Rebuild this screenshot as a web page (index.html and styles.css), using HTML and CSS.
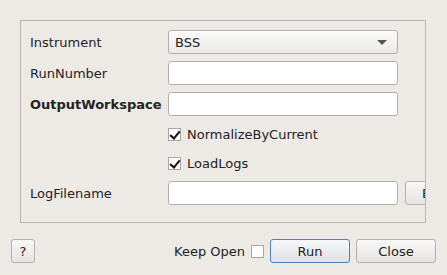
FILE: index.html
```html
<!DOCTYPE html>
<html lang="en">
<head>
    <meta charset="UTF-8">
    <title>LoadEventNexus</title>
    <link rel="stylesheet" href="styles.css">
</head>
<body>

<div class="dialog">
    <div class="frame">
        <div class="form">
            <label class="label">Instrument</label>
            <div class="field">
                <div class="combo">
                    <span>BSS</span>
                    <span class="arrow"></span>
                </div>
            </div>

            <label class="label">RunNumber</label>
            <div class="field"><input class="text" type="text"></div>

            <label class="label bold">OutputWorkspace</label>
            <div class="field"><input class="text" type="text"></div>

            <div class="label"></div>
            <div class="field check-row">
                <span class="check on"></span>NormalizeByCurrent
            </div>

            <div class="label"></div>
            <div class="field check-row">
                <span class="check on"></span>LoadLogs
            </div>

            <label class="label">LogFilename</label>
            <div class="field">
                <input class="text" type="text">
                <button class="btn browse">Browse</button>
            </div>
        </div>
    </div>

    <div class="footer">
        <button class="btn help">?</button>
        <div class="spacer"></div>
        <span class="keep">Keep Open</span>
        <span class="check"></span>
        <button class="btn wide default">Run</button>
        <button class="btn wide">Close</button>
    </div>
</div>

</body>
</html>
```

FILE: styles.css
```css
body {
    margin: 0;
    padding: 0;
    width: 447px;
    height: 275px;
    background: #edeae6;
    font-family: 'DejaVu Sans', sans-serif;
    font-size: 13px;
    color: #222;
    overflow: hidden;
}

.dialog {
    padding: 20px 0 0 20px;
}

.frame {
    width: 404px;
    height: 201px;
    border: 1px solid #b9b6b1;
    overflow: hidden;
}

.form {
    display: grid;
    grid-template-columns: 138px auto;
    row-gap: 7px;
    padding: 9px 0 0 9px;
}

.label {
    display: flex;
    align-items: center;
    height: 24px;
}

.bold {
    font-weight: bold;
}

.field {
    display: flex;
    align-items: center;
    gap: 7px;
    height: 24px;
}

.check-row {
    height: 22px;
    gap: 6px;
}

.label:has(+ .check-row) {
    height: 22px;
}

.combo {
    box-sizing: border-box;
    width: 230px;
    height: 24px;
    border: 1px solid #b3b0ab;
    border-radius: 3px;
    background: linear-gradient(#fbfbfa, #ebe9e6);
    display: flex;
    align-items: center;
    justify-content: space-between;
    padding: 0 10px 0 6px;
}

.arrow {
    width: 0;
    height: 0;
    border-left: 5px solid transparent;
    border-right: 5px solid transparent;
    border-top: 5px solid #555;
}

.text {
    box-sizing: border-box;
    width: 230px;
    height: 24px;
    margin: 0;
    border: 1px solid #b3b0ab;
    border-radius: 3px;
    background: #fff;
}

.check {
    box-sizing: border-box;
    display: inline-block;
    width: 13px;
    height: 13px;
    border: 1px solid #a9a6a1;
    background: #fff;
    position: relative;
}

.check.on::after {
    content: "";
    position: absolute;
    left: 3px;
    top: 0px;
    width: 4px;
    height: 8px;
    border-right: 2px solid #111;
    border-bottom: 2px solid #111;
    transform: rotate(40deg);
}

.btn {
    box-sizing: border-box;
    height: 24px;
    margin: 0;
    padding: 0;
    border: 1px solid #b3b0ab;
    border-radius: 3px;
    background: linear-gradient(#f8f7f6, #e6e4e1);
    font-family: 'DejaVu Sans', sans-serif;
    font-size: 13px;
    color: #222;
}

.browse {
    flex: none;
    width: 70px;
    text-align: left;
    padding-left: 16px;
}

.footer {
    display: flex;
    align-items: center;
    gap: 6px;
    margin: 16px 11px 0 -9px;
}

.help {
    width: 24px;
}

.spacer {
    flex: 1;
}

.wide {
    width: 80px;
}

.default {
    border-color: #4b82b8;
    background: linear-gradient(#f6f7f8, #dde2e6);
}
```
